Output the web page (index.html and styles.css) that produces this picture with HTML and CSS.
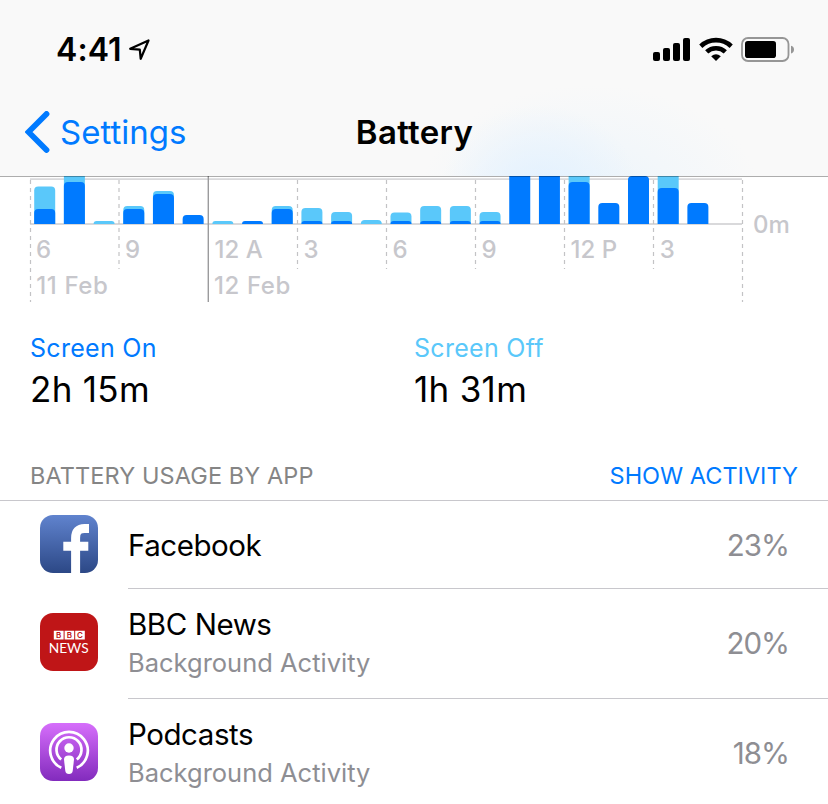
FILE: index.html
```html
<!DOCTYPE html>
<html lang="en">
<head>
<meta charset="utf-8">
<title>Battery</title>
<link rel="stylesheet" href="styles.css">
</head>
<body>
<header class="header">
  <div class="status">
    <div class="status-left">
      <span class="clock">4:41</span>
      <svg class="location" width="22" height="22" viewBox="0 0 22 22"><path d="M1.2 9.8 19.5 1.5 11.7 19.8 10.8 10.7Z" fill="none" stroke="#000" stroke-width="2.2" stroke-linejoin="round"/></svg>
    </div>
    <div class="status-right">
      <svg width="37" height="24" viewBox="0 0 37 24"><rect x="0" y="15" width="7" height="9" rx="2"/><rect x="10" y="11" width="7" height="13" rx="2"/><rect x="20" y="6" width="7" height="18" rx="2"/><rect x="30" y="1" width="7" height="23" rx="2"/></svg>
      <svg class="wifi" width="34" height="24" viewBox="0 0 34 24"><g fill="none" stroke="#000" stroke-width="4.6"><path d="M1.8 9.2Q8.3 3.1 17 3.1T32.2 9.2"/><path d="M7.7 14.8Q11.5 11.2 17 11.2T26.3 14.8"/></g><path d="M12.2 19.2Q17 15.4 21.8 19.2L17 24Z"/></svg>
      <svg class="cell" width="53" height="26" viewBox="0 0 53 26"><rect x="1" y="1" width="46.5" height="23" rx="6" fill="none" stroke="#969696" stroke-width="1.8"/><rect x="4" y="4" width="31" height="17" rx="2.8"/><path d="M50 8.700Q53 9.500 53 12.500T50 16.500Z" fill="#969696"/></svg>
    </div>
  </div>
  <nav class="nav">
    <a class="back"><svg width="25" height="42" viewBox="0 0 25 42"><path d="M21.500 3 3.500 21 21.500 39" fill="none" stroke="#007aff" stroke-width="5.800" stroke-linecap="round"/></svg><span>Settings</span></a>
    <h1>Battery</h1>
  </nav>
</header>
<main>
  <svg class="chart" width="828" height="127" viewBox="0 176 828 127">
    <path d="M30 179.2H742M30 224H742" stroke="#d9d9db" stroke-width="1.8"/>
    <g stroke="#c3c3c5" stroke-width="1.2" stroke-dasharray="4 4">
      <path d="M30.5 180V302M742.5 180V302"/>
      <path d="M119 180V269M297.5 180V269M386.5 180V269M475.5 180V269M564.5 180V269M653.5 180V269"/>
    </g>
    <g id="bars"></g>
    <path d="M208.3 176V302" stroke="#9b9b9d" stroke-width="1.4"/>
    <path d="M0 176.500H828" stroke="#000" stroke-opacity=".32"/>
    <g class="axis">
      <text x="36" y="257.500">6</text><text x="125" y="257.500">9</text><text x="214.500" y="257.500">12 A</text><text x="303.500" y="257.500">3</text><text x="392.500" y="257.500">6</text><text x="481.500" y="257.500">9</text><text x="570.500" y="257.500">12 P</text><text x="659.700" y="257.500">3</text>
      <text class="day" x="36.300" y="294">11 Feb</text><text class="day" x="214" y="294">12 Feb</text><text x="753" y="233">0m</text>
    </g>
  </svg>
  <section class="totals">
    <div class="on"><h2>Screen On</h2><p>2h 15m</p></div>
    <div class="off"><h2>Screen Off</h2><p>1h 31m</p></div>
  </section>
  <div class="list-head"><span class="caption">BATTERY USAGE BY APP</span><a class="toggle">SHOW ACTIVITY</a></div>
  <ul class="apps">
    <li class="app single">
      <svg class="icon" width="58" height="58" viewBox="0 0 58 58"><defs><linearGradient id="fb" x2="0" y2="1"><stop stop-color="#6083ce"/><stop offset="1" stop-color="#2c4886"/></linearGradient></defs><rect width="58" height="58" rx="13" fill="url(#fb)"/><path d="M35.600 58V23Q35.600 13.400 44.500 13.400H49M23.300 31.200H48.300" fill="none" stroke="#fff" stroke-width="9"/></svg>
      <div class="row"><div><h3>Facebook</h3></div><span class="pct">23%</span></div>
    </li>
    <li class="app">
      <svg class="icon" width="58" height="58" viewBox="0 0 58 58"><rect width="58" height="58" rx="13" fill="#bf1517"/><path d="M13.800 17.700h9.800v8.800h-9.800zM24.600 17.700h9.600v8.800h-9.600zM35.200 17.700h9.600v8.800h-9.600z" fill="#fff"/><g class="bbc"><text x="18.700" y="24.800">B</text><text x="29.400" y="24.800">B</text><text x="40" y="24.800">C</text></g><text class="news" x="28.700" y="39.700" textLength="40" lengthAdjust="spacingAndGlyphs">NEWS</text></svg>
      <div class="row double"><div><h3>BBC News</h3><p>Background Activity</p></div><span class="pct">20%</span></div>
    </li>
    <li class="app">
      <svg class="icon" width="58" height="58" viewBox="0 0 58 58"><defs><linearGradient id="pod" x2="0" y2="1"><stop stop-color="#d66efb"/><stop offset="1" stop-color="#822bbd"/></linearGradient></defs><rect width="58" height="58" rx="13" fill="url(#pod)"/><g fill="none" stroke="#fff" stroke-width="2.7"><path d="M21.300 44.800A18.800 18.800 0 1 1 36.700 44.800"/><path d="M21.200 36.500A12.500 12.500 0 1 1 36.800 36.500"/></g><circle cx="29" cy="25" r="4.700" fill="#fff"/><path d="M24 36.500Q24 32.500 29 32.500T34 36.500L32.700 48Q32.300 51 29 51T25.300 48Z" fill="#fff"/></svg>
      <div class="row double"><div><h3>Podcasts</h3><p>Background Activity</p></div><span class="pct">18%</span></div>
    </li>
  </ul>
</main>
<script src="chart.js"></script>
</body>
</html>
```
FILE: styles.css
```css
* { box-sizing: border-box; margin: 0; padding: 0; }
body { width: 828px; height: 804px; overflow: hidden; background: #fff; color: #000; font-family: Inter, "Liberation Sans", sans-serif; font-weight: 400; }
h1, h2, h3 { font-weight: 400; }
svg { display: block; flex: none; }
.header { height: 176px; background: radial-gradient(ellipse 100px 90px at 540px 195px, #e2f1ff 0, rgba(226,241,255,0) 100%), radial-gradient(ellipse 170px 110px at 590px 195px, #edf5fb 0, rgba(237,245,251,0) 100%), #f9f9f9; }
.status { height: 88px; display: flex; justify-content: space-between; padding: 37px 34px 0 56px; }
.status-left, .status-right { display: flex; align-items: flex-start; }
.clock { font-size: 32px; line-height: 26px; font-weight: 600; letter-spacing: .1px; width: 73px; white-space: nowrap; }
.location { margin-top: 2px; }
.wifi { margin-left: 9px; }
.cell { margin-left: 8px; }
.nav { height: 88px; display: grid; grid-template-columns: 331px 167px 330px; align-items: center; }
.back { display: flex; align-items: center; gap: 10px; padding-left: 25px; color: #007aff; font-size: 33px; }
h1 { font-size: 33px; font-weight: 600; letter-spacing: .3px; text-align: center; white-space: nowrap; }
.axis { fill: #c7c7cc; font-size: 24px; font-weight: 500; }
.day { letter-spacing: .6px; }
.dark { fill: #007aff; }
.light { fill: #5ac8fa; }
.totals { display: grid; grid-template-columns: 384px 1fr; padding: 29px 30px 0; height: 150px; }
.totals h2 { font-size: 25px; line-height: 32px; letter-spacing: .3px; }
.on h2 { color: #007aff; }
.off h2 { color: #5ac8fa; }
.totals p { font-size: 35px; line-height: 44px; margin-top: 3px; letter-spacing: .3px; }
.list-head { height: 48px; display: flex; justify-content: space-between; align-items: center; padding: 0 30px 2px; font-size: 23.5px; border-bottom: 1px solid #c8c7cc; }
.caption { color: #858585; letter-spacing: .1px; }
.toggle { color: #007aff; }
.apps { list-style: none; }
.app { height: 110px; padding-left: 40px; display: flex; align-items: center; gap: 30px; }
.icon { margin-bottom: 4px; }
.single { height: 88px; }
.single .icon { margin-bottom: 2px; }
.row { flex: 1; height: 100%; display: flex; justify-content: space-between; align-items: center; padding-right: 39px; border-bottom: 1px solid #c8c7cc; }
.double { padding-bottom: 1px; }
.row h3 { font-size: 29.5px; line-height: 38px; letter-spacing: -.45px; }
.row p { font-size: 25.5px; line-height: 38px; color: #8e8e93; }
.double p { padding-top: 1px; }
.pct { font-size: 29.5px; letter-spacing: -1px; color: #8e8e93; }
.bbc { fill: #bf1517; font-size: 8px; font-weight: 600; text-anchor: middle; }
.news { fill: #fff; font-family: Lato, sans-serif; font-size: 13.5px; text-anchor: middle; }
```
FILE: chart.js
```js
// Hourly usage: [top of total, top of screen-on], in chart units; null when absent.
const hours = [[186.5,209],[165,182],[221,null],[206,209],[191,194],[null,215],[221,null],[null,221],[206,209],[208,221],[212,221],[220,null],[212.5,221],[206,221],[206,221],[212,221],[null,165],[null,165],[165,182],[null,203],[null,176],[165,188],[null,203]];
const base = 224;
function bar(x, top, cls) {
  const r = Math.min(4, base - top);
  return `<path class="${cls}" d="M${x} ${base}V${top + r}q0 ${-r} ${r} ${-r}h${21 - 2 * r}q${r} 0 ${r} ${r}V${base}z"/>`;
}
document.getElementById("bars").innerHTML = hours.map(([total, on], i) => {
  const x = 34.2 + i * 29.69;
  return (total === null ? "" : bar(x, total, "light")) + (on === null ? "" : bar(x, on, "dark"));
}).join("");
```
